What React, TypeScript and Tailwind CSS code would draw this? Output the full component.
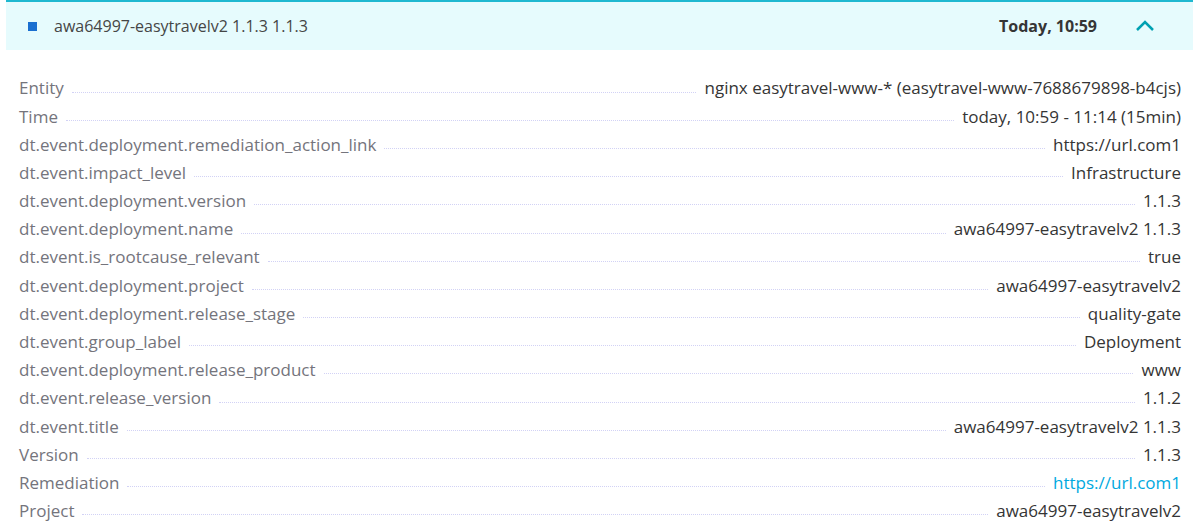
import React from "react";

const rows: { label: string; value: string; link?: boolean }[] = [
  { label: "Entity", value: "nginx easytravel-www-* (easytravel-www-7688679898-b4cjs)" },
  { label: "Time", value: "today, 10:59 - 11:14 (15min)" },
  { label: "dt.event.deployment.remediation_action_link", value: "https://url.com1" },
  { label: "dt.event.impact_level", value: "Infrastructure" },
  { label: "dt.event.deployment.version", value: "1.1.3" },
  { label: "dt.event.deployment.name", value: "awa64997-easytravelv2 1.1.3" },
  { label: "dt.event.is_rootcause_relevant", value: "true" },
  { label: "dt.event.deployment.project", value: "awa64997-easytravelv2" },
  { label: "dt.event.deployment.release_stage", value: "quality-gate" },
  { label: "dt.event.group_label", value: "Deployment" },
  { label: "dt.event.deployment.release_product", value: "www" },
  { label: "dt.event.release_version", value: "1.1.2" },
  { label: "dt.event.title", value: "awa64997-easytravelv2 1.1.3" },
  { label: "Version", value: "1.1.3" },
  { label: "Remediation", value: "https://url.com1", link: true },
  { label: "Project", value: "awa64997-easytravelv2" },
];

export default function App() {
  return (
    <div className="w-[1201px] h-[530px] overflow-hidden bg-white font-['Open_Sans',sans-serif] text-[16px]">
      {/* header */}
      <div className="mx-[6px] w-[1187px] h-[50px] bg-[#e6fbfd] border-t-2 border-[#1fb8d0] flex items-center">
        <span className="ml-[22px] w-[9px] h-[9px] bg-[#1a6fd0]" />
        <span className="ml-[17px] text-[#454646]">awa64997-easytravelv2 1.1.3 1.1.3</span>
        <span className="ml-auto font-bold text-[#353535]">Today, 10:59</span>
        <svg className="ml-[38px] mr-[38px]" width="20" height="12" viewBox="0 0 20 12">
          <path d="M2 10 L10 2 L18 10" fill="none" stroke="#00a1b2" strokeWidth="2.5" />
        </svg>
      </div>

      {/* details */}
      <div className="pl-[19px] pr-[20px] pt-[24px] text-[17px]">
        {rows.map((r) => (
          <div key={r.label} className="flex items-center h-[28.2px]">
            <span className="text-[#74747c] whitespace-nowrap">{r.label}</span>
            <span className="flex-1 mx-[8px] mt-[8px] border-b border-dotted border-[#d2d2f5]" />
            <span className={r.link ? "text-[#00a9e0] whitespace-nowrap" : "text-[#353535] whitespace-nowrap"}>
              {r.value}
            </span>
          </div>
        ))}
      </div>
    </div>
  );
}
